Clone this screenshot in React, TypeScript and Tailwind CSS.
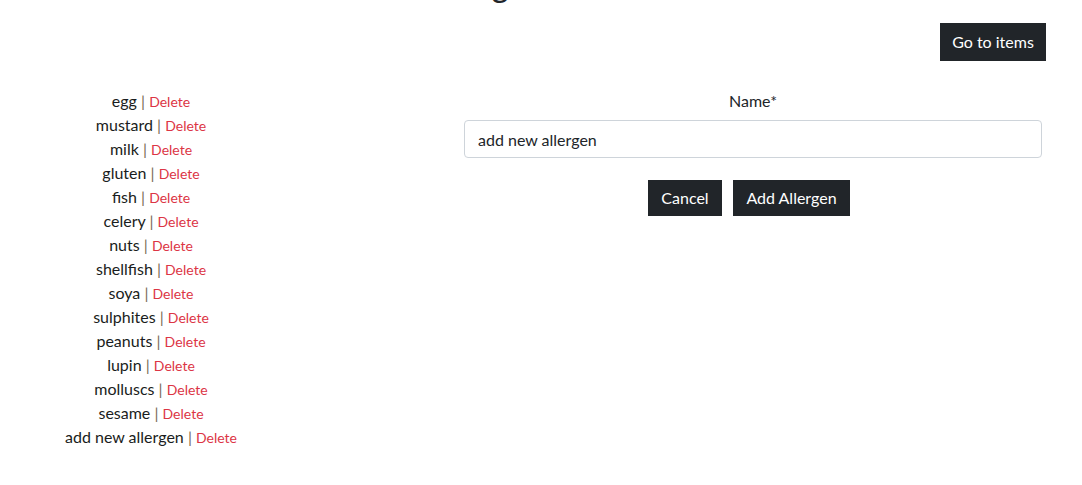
const allergens = [
  "egg",
  "mustard",
  "milk",
  "gluten",
  "fish",
  "celery",
  "nuts",
  "shellfish",
  "soya",
  "sulphites",
  "peanuts",
  "lupin",
  "molluscs",
  "sesame",
  "add new allergen",
];

export default function App() {
  return (
    <div className="min-h-screen bg-white text-[#212529] font-['Lato','Liberation_Sans',sans-serif] overflow-hidden">
      <h1 className="-mt-[34px] text-center text-[32px] leading-[38px] font-medium">
        Allergens Admin
      </h1>

      <div className="flex justify-end pr-[36px] mt-[19px]">
        <button className="bg-[#212529] text-white text-base px-3 h-[38px] w-[106px]">
          Go to items
        </button>
      </div>

      <div className="flex mt-[28px]">
        <ul className="w-[302px] text-center">
          {allergens.map((name) => (
            <li key={name} className="text-base leading-6 text-[#1a1d20]">
              {name} <span className="text-[#7a6a55]">|</span>{" "}
              <a href="#" className="text-sm text-[#dc3545]">
                Delete
              </a>
            </li>
          ))}
        </ul>

        <form className="ml-[162px] w-[578px] flex flex-col items-center">
          <label className="text-base leading-6">Name*</label>
          <input
            defaultValue="add new allergen"
            className="mt-[7px] w-full h-[38px] border border-[#ced4da] rounded px-[13px] text-base text-[#212529] outline-none"
          />
          <div className="flex gap-[11px] mt-[22px] -ml-[8px]">
            <button type="button" className="bg-[#212529] text-white text-base h-9 w-[74px]">
              Cancel
            </button>
            <button type="button" className="bg-[#212529] text-white text-base h-9 w-[117px]">
              Add Allergen
            </button>
          </div>
        </form>
      </div>
    </div>
  );
}
